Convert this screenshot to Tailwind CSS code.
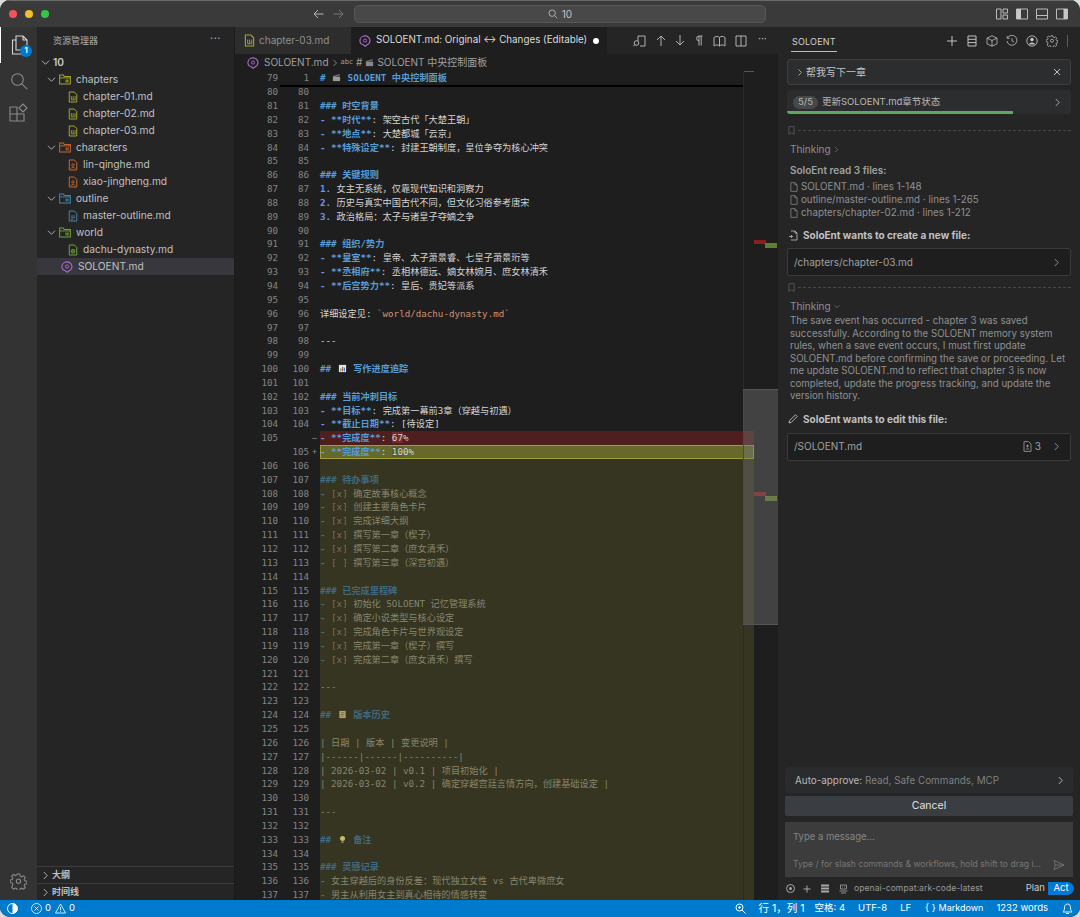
<!DOCTYPE html>
<html lang="zh-CN">
<head>
  <meta charset="UTF-8" />
  <title>SOLOENT.md - 10</title>
  <script src="https://cdn.jsdelivr.net/npm/@tailwindcss/browser@4"></script>
</head>
<body class="bg-[#d9dcdc] overflow-hidden font-['Inter','Noto_Sans_CJK_SC',sans-serif]">
  <svg class="hidden">
    <symbol id="md" viewBox="0 0 12 14"><path d="M1.500 1h6l3 3v9h-9z" fill="none" stroke="currentColor" stroke-width="1.200"/><path d="M4 6v4.500h4.500V6M6.200 6v4" fill="none" stroke="currentColor"/></symbol>
    <symbol id="person" viewBox="0 0 12 14"><path d="M1.500 1h6l3 3v9h-9z" fill="none" stroke="currentColor" stroke-width="1.200"/><circle cx="6" cy="7" r="1.500" fill="none" stroke="currentColor"/><path d="M3.200 11.500c.6-2 5-2 5.600 0" fill="none" stroke="currentColor"/></symbol>
    <symbol id="doc" viewBox="0 0 12 14"><path d="M1.500 1h6l3 3v9h-9z" fill="none" stroke="currentColor" stroke-width="1.200"/><path d="M3.500 7h5M3.500 9h5M3.500 11h3" stroke="currentColor"/></symbol>
    <symbol id="globe" viewBox="0 0 12 14"><path d="M1.500 1h6l3 3v9h-9z" fill="none" stroke="currentColor" stroke-width="1.200"/><circle cx="6" cy="8.500" r="2.300" fill="none" stroke="currentColor"/><path d="M3.700 8.500h4.600M6 6.200v4.600" stroke="currentColor" stroke-width=".8"/></symbol>
    <symbol id="folder" viewBox="0 0 13 11"><path d="M.7.7h4l1 1.600h6.600v8H.7z" fill="none" stroke="currentColor" stroke-width="1.100"/><path d="M.7 3.800h11.600" stroke="currentColor"/><path d="M7 5.500h3.600v3.300H7z" fill="currentColor" opacity=".7"/></symbol>
    <symbol id="brain" viewBox="0 0 13 13"><path d="M6.800 12.200 4.600 10.500C2.600 10 1 8.300 1 6.200 1 3.300 3.300 1 6.300 1s5.600 2.200 5.600 5c0 2.300-1.600 3.900-3.100 4.600z" fill="none" stroke="currentColor" stroke-width="1.200"/><circle cx="6.500" cy="6" r="1.700" fill="none" stroke="currentColor"/></symbol>
    <symbol id="chev" viewBox="0 0 8 10"><path d="M2 1l4 4-4 4" fill="none" stroke="currentColor" stroke-width="1"/></symbol>
    <symbol id="chevd" viewBox="0 0 10 8"><path d="M1 2l4 4 4-4" fill="none" stroke="currentColor" stroke-width="1"/></symbol>
    <symbol id="mark" viewBox="0 0 8 10"><path d="M1 .6h6v8.800L4 7.500 1 9.400z" fill="none" stroke="currentColor"/></symbol>
    <symbol id="page" viewBox="0 0 9 11"><path d="M1 .6h4.500L8 3v7.400H1zM5.500.6V3H8" fill="none" stroke="currentColor" stroke-width=".8"/></symbol>
    <symbol id="gear" viewBox="0 0 16 16"><path d="M6.800 1h2.400l.4 2 1.400.6 1.700-1.100 1.700 1.700-1.100 1.700.6 1.400 2 .4v2.400l-2 .4-.6 1.400 1.100 1.700-1.700 1.700-1.700-1.100-1.400.6-.4 2H6.800l-.4-2-1.400-.6-1.700 1.100-1.700-1.700L2.700 10.700 2.100 9.300l-2-.4V6.500l2-.4.600-1.400-1.100-1.700 1.700-1.700L5 2.400l1.400-.6z" fill="none" stroke="currentColor" stroke-width="1"/><circle cx="8" cy="7.700" r="2" fill="none" stroke="currentColor"/></symbol>
    <symbol id="clap" viewBox="0 0 10 10"><path d="M1 4h8v5H1z" fill="currentColor"/><path d="M1 3.200 8.500 1l.4 1.400-7.500 2.200z" fill="currentColor" opacity=".7"/></symbol>
    <symbol id="chart" viewBox="0 0 10 10"><path d="M1 1h8v8H1z" fill="#e8e8e8"/><path d="M2.500 5h1.300v3H2.500z" fill="#3fa05a"/><path d="M4.500 3h1.300v5H4.500z" fill="#d04a4a"/><path d="M6.500 4h1.300v4H6.500z" fill="#3a78c8"/></symbol>
    <symbol id="ledger" viewBox="0 0 10 10"><path d="M1.500 1h7v8h-7z" fill="#b8a468"/><path d="M3 3h4M3 5h4M3 7h3" stroke="#5a5038" stroke-width=".7"/></symbol>
    <symbol id="bulb" viewBox="0 0 10 10"><circle cx="5" cy="4" r="2.800" fill="#c8b86a"/><path d="M3.800 7h2.400v2H3.800z" fill="#888"/></symbol>
  </svg>

  <div class="h-[917px] w-[1080px] flex flex-col rounded-[10px] overflow-hidden bg-[#252526]">
    <!-- title bar -->
    <div class="h-[27px] shrink-0 flex items-center bg-[#3a3a3a] border-t border-[#6a6a6a]">
      <div class="w-[354px] shrink-0 flex items-center pl-[9px]">
        <div class="flex items-center gap-[8px]">
          <span class="w-[8px] h-[8px] rounded-full bg-[#f2545b]"></span>
          <span class="w-[8px] h-[8px] rounded-full bg-[#f5bd2e]"></span>
          <span class="w-[8px] h-[8px] rounded-full bg-[#33c748]"></span>
        </div>
        <svg class="ml-[264px] w-[11px] h-[10px] shrink-0 text-[#b4b4b4]" viewBox="0 0 11 10"><path d="M10.500 5H1M5 1 1 5l4 4" fill="none" stroke="currentColor"/></svg>
        <svg class="ml-[9px] w-[11px] h-[10px] shrink-0 text-[#777]" viewBox="0 0 11 10"><path d="M.5 5H10M6 1l4 4-4 4" fill="none" stroke="currentColor"/></svg>
      </div>
      <div class="w-[412px] h-[18px] shrink-0 flex items-center justify-center gap-[4px] rounded-[5px] bg-[#484848] border border-[#565656] text-[10px] text-[#c4c4c4]">
        <svg class="w-[10px] h-[10px]" viewBox="0 0 10 10"><circle cx="4.200" cy="4.200" r="3.200" fill="none" stroke="currentColor" stroke-width=".8"/><path d="m6.600 6.600 2.700 2.700" stroke="currentColor" stroke-width=".8"/></svg>
        <span>10</span>
      </div>
      <div class="flex-1 flex items-center justify-end gap-[8px] pr-[12px] text-[#c8c8c8]">
        <svg class="w-[12px] h-[12px]" viewBox="0 0 12 12"><path d="M.5 1h4.500v10H.5zM7 1h4.500v4H7zM7 7h4.500v4H7z" fill="none" stroke="currentColor" stroke-width=".9"/></svg>
        <svg class="w-[12px] h-[12px]" viewBox="0 0 12 12"><path d="M.5 1h11v10H.5z" fill="none" stroke="currentColor" stroke-width=".9"/><path d="M.5 1h4.500v10H.5z" fill="currentColor"/></svg>
        <svg class="w-[12px] h-[12px]" viewBox="0 0 12 12"><path d="M.5 1h11v10H.5zM.5 7.500h11" fill="none" stroke="currentColor" stroke-width=".9"/></svg>
        <svg class="w-[12px] h-[12px]" viewBox="0 0 12 12"><path d="M.5 1h11v10H.5z" fill="none" stroke="currentColor" stroke-width=".9"/><path d="M7.500 1h4v10h-4z" fill="currentColor"/></svg>
      </div>
    </div>

    <div class="flex-1 min-h-0 flex">
      <!-- activity bar -->
      <div class="w-[37px] shrink-0 bg-[#333333] flex flex-col items-center text-[#8a8a8a]">
        <div class="relative w-full h-[36px] flex items-center justify-center border-l border-white text-[#d4d4d4]">
          <svg class="w-[17px] h-[20px]" viewBox="0 0 17 20"><path d="M5 1h7l4 4v10H5z M12 1v4h4M5 5H1.500v14h10v-4" fill="none" stroke="currentColor" stroke-width="1.100"/></svg>
          <span class="absolute left-[19px] top-[18px] w-[12px] h-[12px] rounded-full bg-[#0078d4] text-white text-[7.500px] font-bold flex items-center justify-center">1</span>
        </div>
        <svg class="w-[18px] h-[18px] mt-[9px]" viewBox="0 0 18 18"><circle cx="7.500" cy="7.500" r="5.800" fill="none" stroke="currentColor" stroke-width="1.100"/><path d="m11.800 11.800 5.400 5.400" stroke="currentColor" stroke-width="1.100"/></svg>
        <svg class="w-[19px] h-[19px] mt-[13px]" viewBox="0 0 19 19"><path d="M1 4h7v7H1zM1 11h7v7H1zM8 11h7v7H8z" fill="none" stroke="currentColor" stroke-width="1.100"/><path d="m14 1 4 4-4 4-4-4z" fill="none" stroke="currentColor" stroke-width="1.100"/></svg>
        <svg class="mt-auto mb-[10px] w-[17px] h-[17px]"><use href="#gear"/></svg>
      </div>

      <!-- explorer -->
      <div class="w-[197px] shrink-0 flex flex-col bg-[#252526] text-[10.200px] text-[#c0c0c0]">
        <div class="h-[27px] flex items-center justify-between pl-[16px] pr-[13px] text-[9px] text-[#b0b0b0]"><span>资源管理器</span><span class="text-[11px] tracking-[0.5px] -mt-[4px]">···</span></div>
        <div id="tree"></div>
        <div class="mt-auto">
          <div class="h-[17px] flex items-center gap-[3px] pl-[5px] border-t border-[#3c3c3c] text-[9px] font-semibold text-[#c0c0c0]"><svg class="w-[7px] h-[9px]"><use href="#chev"/></svg><span>大纲</span></div>
          <div class="h-[17px] flex items-center gap-[3px] pl-[5px] border-t border-[#3c3c3c] text-[9px] font-semibold text-[#c0c0c0]"><svg class="w-[7px] h-[9px]"><use href="#chev"/></svg><span>时间线</span></div>
        </div>
      </div>

      <!-- editor -->
      <div class="w-[544px] shrink-0 flex flex-col bg-[#1e1e1e] border-l border-[#1a1a1a]">
        <div class="h-[27px] shrink-0 flex items-center bg-[#252526] text-[10px] whitespace-nowrap">
          <div class="w-[116px] h-full flex items-center gap-[4px] pl-[9px] bg-[#2d2d2d] text-[#8f8f8f]">
            <svg class="w-[11px] h-[13px] shrink-0 text-[#a5a52f]"><use href="#md"/></svg><span>chapter-03.md</span>
          </div>
          <div class="w-[256px] h-full flex items-center gap-[5px] pl-[8px] bg-[#1e1e1e] text-[9.800px] text-[#dcdcdc]">
            <svg class="w-[12px] h-[12px] shrink-0 text-[#a86bd0]"><use href="#brain"/></svg><span>SOLOENT.md: Original ↔ Changes (Editable)</span>
            <span class="ml-auto mr-[8px] w-[6px] h-[6px] shrink-0 rounded-full bg-white"></span>
          </div>
          <div class="flex-1 flex items-center justify-between pl-[26px] pr-[10px] text-[#c0c0c0]">
            <svg class="w-[13px] h-[12px]" viewBox="0 0 13 12"><path d="M5 1h7v10H7M5 1v5" fill="none" stroke="currentColor" stroke-width=".9"/><circle cx="3.500" cy="8" r="2.300" fill="none" stroke="currentColor" stroke-width=".9"/><path d="m1.800 9.700-1.200 1.400" stroke="currentColor"/></svg>
            <svg class="w-[10px] h-[11px]" viewBox="0 0 10 11"><path d="M5 11V1M1 5l4-4 4 4" fill="none" stroke="currentColor" stroke-width=".9"/></svg>
            <svg class="w-[10px] h-[11px]" viewBox="0 0 10 11"><path d="M5 0v10M1 6l4 4 4-4" fill="none" stroke="currentColor" stroke-width=".9"/></svg>
            <svg class="w-[8px] h-[11px]" viewBox="0 0 8 11"><path d="M4 1h3.500M4 1v9.500M6.200 1v9.500M4 1a2.400 2.400 0 0 0 0 4.800" fill="none" stroke="currentColor" stroke-width=".9"/></svg>
            <svg class="w-[13px] h-[12px]" viewBox="0 0 13 12"><path d="M1 2.500c2-1.500 4-1.500 5.500 0 1.500-1.500 3.500-1.500 5.500 0V11c-2-1.500-4-1.500-5.500 0C5 9.500 3 9.500 1 11zM6.500 2.500V11" fill="none" stroke="currentColor" stroke-width=".9"/></svg>
            <svg class="w-[12px] h-[12px]" viewBox="0 0 12 12"><path d="M1 1h10v10H1zM6 1v10" fill="none" stroke="currentColor" stroke-width=".9"/></svg>
            <span class="text-[10px] -mt-[4px] w-[11px] text-center">···</span>
          </div>
        </div>
        <div class="h-[17px] shrink-0 flex items-center gap-[3px] pl-[12px] bg-[#1e1e1e] text-[10px] text-[#a0a0a0]">
          <svg class="w-[12px] h-[12px] text-[#a86bd0] mr-[2px]"><use href="#brain"/></svg><span>SOLOENT.md</span>
          <svg class="w-[6px] h-[8px]"><use href="#chev"/></svg>
          <span class="text-[7px] font-['DejaVu_Sans']">abc</span><span># </span><svg class="w-[9px] h-[9px] text-[#888]"><use href="#clap"/></svg><span> SOLOENT 中央控制面板</span>
        </div>
        <div class="relative flex-1 min-h-0 overflow-hidden">
          <div id="code" class="flex flex-col text-[9.200px] font-['DejaVu_Sans_Mono','Noto_Sans_CJK_SC',monospace]"></div>
          <!-- sticky line shadow -->
          <div class="absolute left-[45px] w-[463px] top-[14px] h-[1.500px] bg-black"></div>
          <!-- overview ruler + slider -->
          <div class="absolute left-[508px] top-0 bottom-0 w-px bg-[#2a2a2a]"></div>
          <div class="absolute left-[509px] top-0 w-[10px] h-px bg-[#555]"></div>
          <div class="absolute left-[519px] top-[169px] w-[12px] h-[4px] bg-[#8a1f1f]"></div>
          <div class="absolute left-[530px] top-[172px] w-[12px] h-[5px] bg-[#5f7f2c]"></div>
          <div class="absolute left-[519px] top-[421px] w-[12px] h-[4px] bg-[#8a1f1f]"></div>
          <div class="absolute left-[530px] top-[425px] w-[12px] h-[5px] bg-[#5f7f2c]"></div>
          <div class="absolute left-[508px] top-[318px] w-[35px] h-[236px] bg-[#79797966] border-y border-[#555]"></div>
        </div>
      </div>

      <!-- right panel -->
      <div class="flex-1 min-w-0 flex flex-col bg-[#252526] px-[7px] text-[10px] text-[#a8a8a8]">
        <div class="h-[27px] shrink-0 flex items-center text-[#c0c0c0]">
          <span class="ml-[6px] h-[17px] mt-[5px] border-b border-[#bdbdbd] px-[1px] text-[9px] tracking-[0.2px] text-[#d0d0d0]">SOLOENT</span>
          <div class="ml-auto flex items-center gap-[8px] pr-[5px]">
            <svg class="w-[12px] h-[12px]" viewBox="0 0 12 12"><path d="M6 1v10M1 6h10" stroke="currentColor" fill="none"/></svg>
            <svg class="w-[12px] h-[12px]" viewBox="0 0 12 12"><path d="M2 1h8v10H2zM2 4.300h8M2 7.600h8" stroke="currentColor" fill="none"/></svg>
            <svg class="w-[12px] h-[12px]" viewBox="0 0 12 12"><path d="m6 .8 5 2.300v5.800L6 11.200 1 8.900V3.100zM1 3.100l5 2.400 5-2.400M6 5.500v5.700" stroke="currentColor" fill="none" stroke-width=".8"/></svg>
            <svg class="w-[12px] h-[12px]" viewBox="0 0 12 12"><path d="M1.500 3A5 5 0 1 1 1 6M1.200 1v2.300h2.300M6 3.300V6l2 1" stroke="currentColor" fill="none" stroke-width=".8"/></svg>
            <svg class="w-[12px] h-[12px]" viewBox="0 0 12 12"><circle cx="6" cy="6" r="5.200" stroke="currentColor" fill="none" stroke-width=".9"/><circle cx="6" cy="4.600" r="1.800" fill="currentColor"/><path d="M2.800 9.500c.6-2.700 5.800-2.700 6.400 0z" fill="currentColor"/></svg>
            <svg class="w-[12px] h-[12px]"><use href="#gear"/></svg>
            <span class="w-px h-[12px] bg-[#5a5a5a] ml-[1px]"></span>
          </div>
        </div>
        <div class="mt-[5px] mx-[2px] h-[26px] shrink-0 flex items-center gap-[3px] px-[9px] rounded-[3px] bg-[#2c2d2e] border border-[#3e3e3e] text-[10px] text-[#c4c4c4]">
          <svg class="w-[6px] h-[9px]"><use href="#chev"/></svg><span>帮我写下一章</span>
          <svg class="ml-auto w-[8px] h-[8px]" viewBox="0 0 8 8"><path d="m1 1 6 6M7 1 1 7" stroke="currentColor"/></svg>
        </div>
        <div class="mt-[5px] mx-[2px] h-[24px] shrink-0 relative flex items-center gap-[4px] pl-[6px] pr-[10px] rounded-[3px] overflow-hidden bg-[#2c2d2e] text-[9.500px] text-[#b8b8b8]">
          <span class="h-[13px] w-[25px] rounded-full bg-[#46484a] flex items-center justify-center">5/5</span>
          <span>更新SOLOENT.md章节状态</span>
          <svg class="ml-auto w-[7px] h-[9px]"><use href="#chev"/></svg>
          <div class="absolute left-0 bottom-0 h-[3px] w-[226px] bg-[#5fa85f]"></div>
        </div>
        <div class="mt-[11px] mx-[2px] h-[10px] shrink-0 flex items-center gap-[3px] text-[#5a5a5a]">
          <svg class="w-[7px] h-[9px] ml-[1px]"><use href="#mark"/></svg><div class="flex-1 border-t border-dashed border-[#484848]"></div>
        </div>
        <div class="mt-[7px] pl-[5px] flex items-center gap-[3px] text-[10px] text-[#8f8f8f]"><span>Thinking</span><svg class="w-[5px] h-[7px]"><use href="#chev"/></svg></div>
        <div class="mt-[7px] pl-[5px] font-semibold text-[#a0a0a0] leading-[12px]">SoloEnt read 3 files:</div>
        <div class="mt-[4px] pl-[5px] flex flex-col text-[9.800px] leading-[13px] text-[#909090]">
          <div class="flex items-center gap-[3px]"><svg class="w-[8px] h-[10px]"><use href="#page"/></svg>SOLOENT.md · lines 1-148</div>
          <div class="flex items-center gap-[3px]"><svg class="w-[8px] h-[10px]"><use href="#page"/></svg>outline/master-outline.md · lines 1-265</div>
          <div class="flex items-center gap-[3px]"><svg class="w-[8px] h-[10px]"><use href="#page"/></svg>chapters/chapter-02.md · lines 1-212</div>
        </div>
        <div class="mt-[10px] ml-[3px] flex items-center gap-[5px] font-bold text-[#c0c0c0] leading-[13px]">
          <svg class="w-[10px] h-[11px] text-[#c0c0c0]" viewBox="0 0 10 11"><path d="M3 1h4l2 2v7H3M7 1v2h2M1 6.500h3.500M3 5l1.500 1.500L3 8" fill="none" stroke="currentColor" stroke-width=".8"/></svg>
          <span>SoloEnt wants to create a new file:</span>
        </div>
        <div class="mt-[6px] mx-[2px] h-[28px] shrink-0 flex items-center justify-between px-[6px] pr-[10px] bg-[#1e1e1e] border border-[#3a3a3a] rounded-[2px] text-[#a0a0a0]"><span>/chapters/chapter-03.md</span><svg class="w-[7px] h-[9px]"><use href="#chev"/></svg></div>
        <div class="mt-[6px] mx-[2px] h-[10px] shrink-0 flex items-center gap-[3px] text-[#5a5a5a]">
          <svg class="w-[7px] h-[9px] ml-[1px]"><use href="#mark"/></svg><div class="flex-1 border-t border-dashed border-[#484848]"></div>
        </div>
        <div class="mt-[8px] pl-[5px] flex items-center gap-[3px] text-[#8f8f8f] leading-[12px]"><span>Thinking</span><svg class="w-[6px] h-[5px]"><use href="#chevd"/></svg></div>
        <p class="mt-[3px] pl-[5px] pr-[4px] text-[9.700px] leading-[12.500px] text-[#909090]">The save event has occurred - chapter 3 was saved successfully. According to the SOLOENT memory system rules, when a save event occurs, I must first update SOLOENT.md before confirming the save or proceeding. Let me update SOLOENT.md to reflect that chapter 3 is now completed, update the progress tracking, and update the version history.</p>
        <div class="mt-[10px] ml-[3px] flex items-center gap-[5px] font-bold text-[#c0c0c0] leading-[13px]">
          <svg class="w-[10px] h-[10px]" viewBox="0 0 10 10"><path d="M1 9l.6-2.500L7.500.8l1.700 1.700L3.300 8.400z" fill="none" stroke="currentColor" stroke-width=".9"/></svg>
          <span>SoloEnt wants to edit this file:</span>
        </div>
        <div class="mt-[7px] mx-[2px] h-[28px] shrink-0 flex items-center px-[6px] pr-[10px] bg-[#1e1e1e] border border-[#3a3a3a] rounded-[2px] text-[#a0a0a0]">
          <span>/SOLOENT.md</span>
          <svg class="ml-auto w-[9px] h-[11px]" viewBox="0 0 9 11"><path d="M1 .6h4.500L8 3v7.400H1z" fill="none" stroke="currentColor" stroke-width=".8"/><path d="M4.500 3.500v3M3 5h3M3 8h3" stroke="currentColor" stroke-width=".8"/></svg>
          <span class="ml-[3px] mr-[12px]">3</span>
          <svg class="w-[7px] h-[9px]"><use href="#chev"/></svg>
        </div>

        <div class="mt-auto h-[26px] shrink-0 flex items-center justify-between pl-[10px] pr-[9px] rounded-[3px] bg-[#2a2b2c] text-[9.900px]">
          <span><span class="text-[#b8b8b8]">Auto-approve:</span> <span class="text-[#808080]">Read, Safe Commands, MCP</span></span>
          <svg class="w-[7px] h-[9px] text-[#c0c0c0]"><use href="#chev"/></svg>
        </div>
        <div class="mt-[3px] h-[20px] shrink-0 flex items-center justify-center rounded-[2px] bg-[#3a3d41] text-[10.500px] text-[#e0e0e0]">Cancel</div>
        <div class="mt-[6px] h-[55px] shrink-0 flex flex-col justify-between px-[8px] pt-[8px] pb-[6px] bg-[#3c3c3c] text-[#858585] text-[9.500px]">
          <span>Type a message...</span>
          <div class="flex items-center justify-between text-[8.600px] text-[#777]"><span>Type / for slash commands &amp; workflows, hold shift to drag i...</span>
            <svg class="w-[12px] h-[10px] text-[#777]" viewBox="0 0 12 10"><path d="M1 .6 11 5 1 9.400l1.300-4.400zM2.300 5H11" fill="none" stroke="currentColor" stroke-width=".8"/></svg></div>
        </div>
        <div class="h-[23px] shrink-0 flex items-center text-[#a8a8a8] pl-[1px]">
          <span class="w-[9px] h-[9px] rounded-full border border-current flex items-center justify-center"><span class="w-[3px] h-[3px] rounded-full bg-current"></span></span>
          <svg class="ml-[8px] w-[8px] h-[8px]" viewBox="0 0 8 8"><path d="M4 .5v7M.5 4h7" stroke="currentColor"/></svg>
          <svg class="ml-[10px] w-[8px] h-[9px]" viewBox="0 0 8 9"><path d="M0 .5h8v2H0zM0 3.500h8v2H0zM0 6.500h8v2H0z" fill="currentColor"/></svg>
          <svg class="ml-[10px] w-[9px] h-[10px]" viewBox="0 0 9 10"><path d="M1.500 1h6v4h-6zM.5 7h8M2 9h5M3 3h.8M5.200 3H6" stroke="currentColor" fill="none" stroke-width=".8"/></svg>
          <span class="ml-[6px] text-[8.500px] tracking-[0.1px] text-[#999]">openai-compat:ark-code-latest</span>
          <span class="ml-auto mr-[3px] text-[9.500px] text-[#c8c8c8]">Plan</span>
          <span class="h-[13px] w-[26px] rounded-r-full bg-[#0078d4] text-white text-[9.500px] flex items-center justify-center -mr-[1px]">Act</span>
        </div>
      </div>
    </div>

    <!-- status bar -->
    <div class="h-[17px] shrink-0 flex items-center bg-[#007acc] text-[9.500px] text-white">
      <svg class="ml-[7px] w-[11px] h-[11px]" viewBox="0 0 11 11"><circle cx="5.500" cy="5.500" r="5" fill="none" stroke="white"/><path d="M5.500.5a5 5 0 0 1 0 10z" fill="white"/></svg>
      <svg class="ml-[13px] w-[11px] h-[11px]" viewBox="0 0 11 11"><circle cx="5.500" cy="5.500" r="5" fill="none" stroke="white" stroke-width=".8"/><path d="m3.500 3.500 4 4M7.500 3.500l-4 4" stroke="white" stroke-width=".8"/></svg>
      <span class="ml-[3px]">0</span>
      <svg class="ml-[4px] w-[11px] h-[11px]" viewBox="0 0 11 11"><path d="M5.500 1 10.500 10H.5zM5.500 4v3.200M5.500 8v.8" fill="none" stroke="white" stroke-width=".8"/></svg>
      <span class="ml-[3px]">0</span>
      <svg class="ml-auto w-[11px] h-[11px]" viewBox="0 0 11 11"><circle cx="4.500" cy="4.500" r="3.500" fill="none" stroke="white"/><path d="m7 7 3.500 3.500M3 4.500h3M4.500 3v3" stroke="white"/></svg>
      <span class="ml-[13px] text-[10.500px]">行 1，列 1</span>
      <span class="ml-[10px]">空格: 4</span>
      <span class="ml-[13px]">UTF-8</span>
      <span class="ml-[13px]">LF</span>
      <span class="ml-[14px]">{ } <span class="text-[9px]">Markdown</span></span>
      <span class="ml-[13px]">1232 words</span>
      <svg class="ml-[14px] mr-[7px] w-[11px] h-[12px]" viewBox="0 0 11 12"><path d="M5.500 1C3 1 2.500 3 2.500 5c0 2-1 3.500-1.500 4h9c-.5-.5-1.500-2-1.500-4 0-2-.5-4-3-4zM4 10.500h3" fill="none" stroke="white" stroke-width=".9"/></svg>
    </div>
  </div>

  <script>
    // explorer rows: [kind, label, icon colour, icon]
    const treeRows = [
      ["root", "10"],
      ["dir", "chapters", "text-[#a5a52f]"],
      ["file", "chapter-01.md", "text-[#a5a52f]", "md"],
      ["file", "chapter-02.md", "text-[#a5a52f]", "md"],
      ["file", "chapter-03.md", "text-[#a5a52f]", "md"],
      ["dir", "characters", "text-[#c8642e]"],
      ["file", "lin-qinghe.md", "text-[#c8642e]", "person"],
      ["file", "xiao-jingheng.md", "text-[#c8642e]", "person"],
      ["dir", "outline", "text-[#3f86ad]"],
      ["file", "master-outline.md", "text-[#3f86ad]", "doc"],
      ["dir", "world", "text-[#6fa23a]"],
      ["file", "dachu-dynasty.md", "text-[#6fa23a]", "globe"],
      ["brain", "SOLOENT.md", "text-[#a86bd0]"],
    ];
    document.getElementById("tree").innerHTML = treeRows.map(([kind, label, color, icon]) => {
      if (kind === "root") return `<div class="h-[17px] flex items-center pl-[4px] gap-[3px] font-semibold text-[#c8c8c8]"><svg class="w-[9px] h-[7px]"><use href="#chevd"/></svg><span>${label}</span></div>`;
      if (kind === "dir") return `<div class="h-[17px] flex items-center pl-[10px] gap-[3px]"><svg class="w-[9px] h-[7px]"><use href="#chevd"/></svg><svg class="w-[12px] h-[11px] ${color}"><use href="#folder"/></svg><span class="ml-[2px]">${label}</span></div>`;
      if (kind === "file") return `<div class="h-[17px] flex items-center pl-[31px] gap-[5px]"><svg class="w-[10px] h-[12px] ${color}"><use href="#${icon}"/></svg><span>${label}</span></div>`;
      return `<div class="h-[17px] flex items-center pl-[24px] gap-[5px] bg-[#37373d]"><svg class="w-[12px] h-[12px] ${color}"><use href="#brain"/></svg><span>${label}</span></div>`;
    }).join("");

    // old line, new line, text
    const rows = [
      [79, 1, "# @clap SOLOENT 中央控制面板"], [80, 80, ""],
      [81, 81, "### 时空背景"], [82, 82, "- **时代**: 架空古代「大楚王朝」"], [83, 83, "- **地点**: 大楚都城「云京」"],
      [84, 84, "- **特殊设定**: 封建王朝制度，皇位争夺为核心冲突"], [85, 85, ""],
      [86, 86, "### 关键规则"], [87, 87, "1. 女主无系统，仅靠现代知识和洞察力"], [88, 88, "2. 历史与真实中国古代不同，但文化习俗参考唐宋"],
      [89, 89, "3. 政治格局：太子与诸皇子夺嫡之争"], [90, 90, ""],
      [91, 91, "### 组织/势力"], [92, 92, "- **皇室**: 皇帝、太子萧景睿、七皇子萧景珩等"], [93, 93, "- **丞相府**: 丞相林德远、嫡女林婉月、庶女林清禾"],
      [94, 94, "- **后宫势力**: 皇后、贵妃等派系"], [95, 95, ""], [96, 96, "详细设定见: `world/dachu-dynasty.md`"], [97, 97, ""],
      [98, 98, "---"], [99, 99, ""], [100, 100, "## @chart 写作进度追踪"], [101, 101, ""],
      [102, 102, "### 当前冲刺目标"], [103, 103, "- **目标**: 完成第一幕前3章（穿越与初遇）"], [104, 104, "- **截止日期**: [待设定]"],
      [105, "", "- **完成度**: 67%", "del"], ["", 105, "- **完成度**: 100%", "add"], [106, 106, ""],
      [107, 107, "### 待办事项"], [108, 108, "- [x] 确定故事核心概念"], [109, 109, "- [x] 创建主要角色卡片"], [110, 110, "- [x] 完成详细大纲"],
      [111, 111, "- [x] 撰写第一章（楔子）"], [112, 112, "- [x] 撰写第二章（庶女清禾）"], [113, 113, "- [ ] 撰写第三章（深宫初遇）"], [114, 114, ""],
      [115, 115, "### 已完成里程碑"], [116, 116, "- [x] 初始化 SOLOENT 记忆管理系统"], [117, 117, "- [x] 确定小说类型与核心设定"], [118, 118, "- [x] 完成角色卡片与世界观设定"],
      [119, 119, "- [x] 完成第一章（楔子）撰写"], [120, 120, "- [x] 完成第二章（庶女清禾）撰写"], [121, 121, ""], [122, 122, "---"], [123, 123, ""],
      [124, 124, "## @ledger 版本历史"], [125, 125, ""], [126, 126, "| 日期 | 版本 | 变更说明 |"], [127, 127, "|------|------|----------|"],
      [128, 128, "| 2026-03-02 | v0.1 | 项目初始化 |"], [129, 129, "| 2026-03-02 | v0.2 | 确定穿越宫廷言情方向，创建基础设定 |"], [130, 130, ""],
      [131, 131, "---"], [132, 132, ""], [133, 133, "## @bulb 备注"], [134, 134, ""], [135, 135, "### 灵感记录"],
      [136, 136, "- 女主穿越后的身份反差：现代独立女性 vs 古代卑微庶女"], [137, 137, "- 男主从利用女主到真心相待的情感转变"],
    ];

    const bright = { head: "text-[#569cd6] font-bold", mark: "text-[#6796e6] font-bold", bold: "text-[#569cd6] font-bold", code: "text-[#ce9178]", plain: "text-[#d4d4d4]", box: "text-[#d4d4d4]" };
    const dim = { head: "text-[#41697f] font-bold", mark: "text-[#46697f] font-bold", bold: "text-[#41697f] font-bold", code: "text-[#8a6a50]", plain: "text-[#87876f]", box: "text-[#8a6a50]" };

    function emoji(text) {
      return text.replace(/@(\w+)/, '<svg class="inline-block w-[9px] h-[9px] mx-[1px] -mt-[2px] text-[#999]"><use href="#$1"/></svg>');
    }
    function paint(text, c) {
      if (!text) return "";
      if (text.startsWith("#")) return `<span class="${c.head}">${emoji(text)}</span>`;
      if (text === "---") return `<span class="${c.plain}">---</span>`;
      let m = text.match(/^(- |\d\. )(.*)$/);
      let lead = "", rest = text;
      if (m) { lead = `<span class="${c.mark}">${m[1]}</span>`; rest = m[2]; }
      rest = rest
        .replace(/\*\*(.+?)\*\*/, `<span class="${c.bold}">**$1**</span>`)
        .replace(/`(.+?)`/, `<span class="${c.code}">\`$1\`</span>`)
        .replace(/^\[( |x)\]/, `<span class="${c.box}">[$1]</span>`)
        .replace("67%", '<span class="bg-[#732a2a]">67</span>%')
        .replace("100%", '<span class="bg-[#5a5f26]">10</span>0%');
      return lead + `<span class="${c.plain}">${rest}</span>`;
    }

    let pastDiff = false;
    document.getElementById("code").innerHTML = rows.map(([oldNo, newNo, text, kind]) => {
      const colors = pastDiff ? dim : bright;
      let bg = pastDiff ? "bg-[#353521]" : "";
      let sign = "";
      if (kind === "del") { bg = "bg-[#4f1e1e]"; sign = "−"; }
      if (kind === "add") { bg = "bg-[#656a2b] outline outline-1 -outline-offset-1 outline-[#a0a032]"; sign = "+"; pastDiff = true; }
      return `<div class="h-[13.850px] shrink-0 flex items-center leading-none">
        <span class="w-[43px] shrink-0 text-right text-[#858585]">${oldNo}</span>
        <span class="w-[31px] shrink-0 text-right text-[#858585]">${newNo}</span>
        <span class="w-[11px] shrink-0 text-center text-[#858585]">${sign}</span>
        <span class="w-[434px] h-full shrink-0 flex items-center whitespace-pre ${bg}"><span>${paint(text, colors)}</span></span>
      </div>`;
    }).join("");
  </script>
</body>
</html>
